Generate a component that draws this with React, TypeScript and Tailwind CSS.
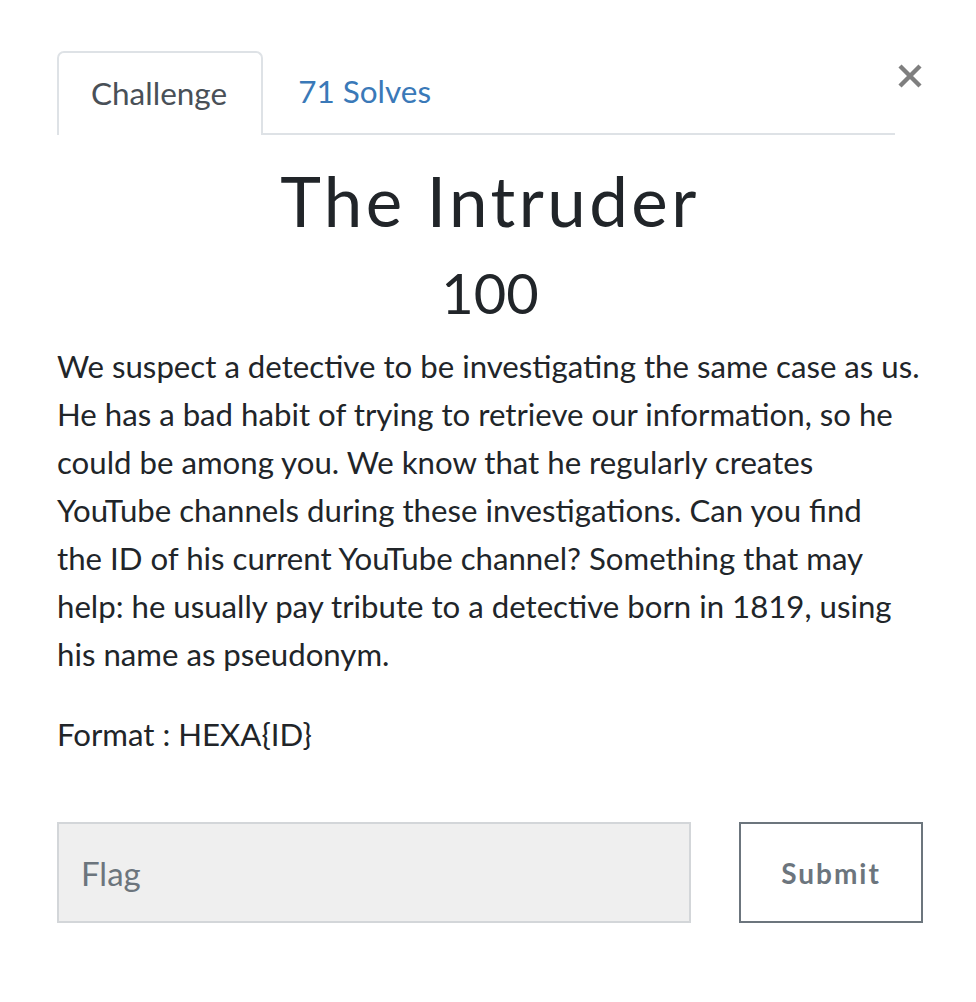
import { useState } from "react";

const body = "font-['Lato','Liberation_Sans',sans-serif]";

export default function App() {
  const [flag, setFlag] = useState("");

  return (
    <div className={`${body} relative min-h-screen bg-white text-[#212529]`}>
      <button
        type="button"
        aria-label="Close"
        className="absolute left-[898px] top-[64px] flex h-[24px] w-[24px] items-center justify-center"
      >
        <svg width="24" height="24" viewBox="0 0 24 24">
          <path d="M2 2l20 20M22 2L2 22" stroke="#7f7f7f" strokeWidth="4.4" />
        </svg>
      </button>

      <div className="pl-[57px] pr-[53px] pt-[51px]">
        <nav className="mr-[28px] flex border-b-2 border-[#dee2e6] text-[31.5px]">
          <div className="-mb-[2px] flex h-[84px] items-center rounded-t-[7px] border-2 border-b-0 border-[#dee2e6] bg-white pl-[32px] pr-[34px] text-[#495057]">
            Challenge
          </div>
          <div className="flex h-[82px] items-center px-[35px] text-[#3a79b8]">
            71 Solves
          </div>
        </nav>

        <h2 className="mt-[24px] text-center text-[69px] leading-[84px] tracking-[0.05em] text-[#212529]">
          The Intruder
        </h2>
        <h3 className="mt-[16px] text-center text-[56px] leading-[67px]">100</h3>

        <p className="mt-[16px] whitespace-nowrap text-[31.2px] leading-[48px]">
          We suspect a detective to be investigating the same case as us.
          <br />
          He has a bad habit of trying to retrieve our information, so he
          <br />
          could be among you. We know that he regularly creates
          <br />
          YouTube channels during these investigations. Can you find
          <br />
          the ID of his current YouTube channel? Something that may
          <br />
          help: he usually pay tribute to a detective born in 1819, using
          <br />
          his name as pseudonym.
        </p>
        <p className="mt-[32px] text-[31.2px] leading-[48px]">Format : HEXA{"{ID}"}</p>

        <form className="mt-[64px] flex gap-[48px]" onSubmit={(e) => e.preventDefault()}>
          <input
            value={flag}
            onChange={(e) => setFlag(e.target.value)}
            placeholder="Flag"
            className="h-[101px] w-[634px] border-2 border-[#d3d6d9] bg-[#efefef] px-[22px] text-[33px] text-[#495057] outline-none placeholder:text-[#6c757d]"
          />
          <button
            type="submit"
            className="h-[101px] w-[184px] border-2 border-[#6c757d] bg-white text-[28px] font-bold tracking-[0.07em] text-[#6c757d]"
          >
            Submit
          </button>
        </form>
      </div>
    </div>
  );
}
